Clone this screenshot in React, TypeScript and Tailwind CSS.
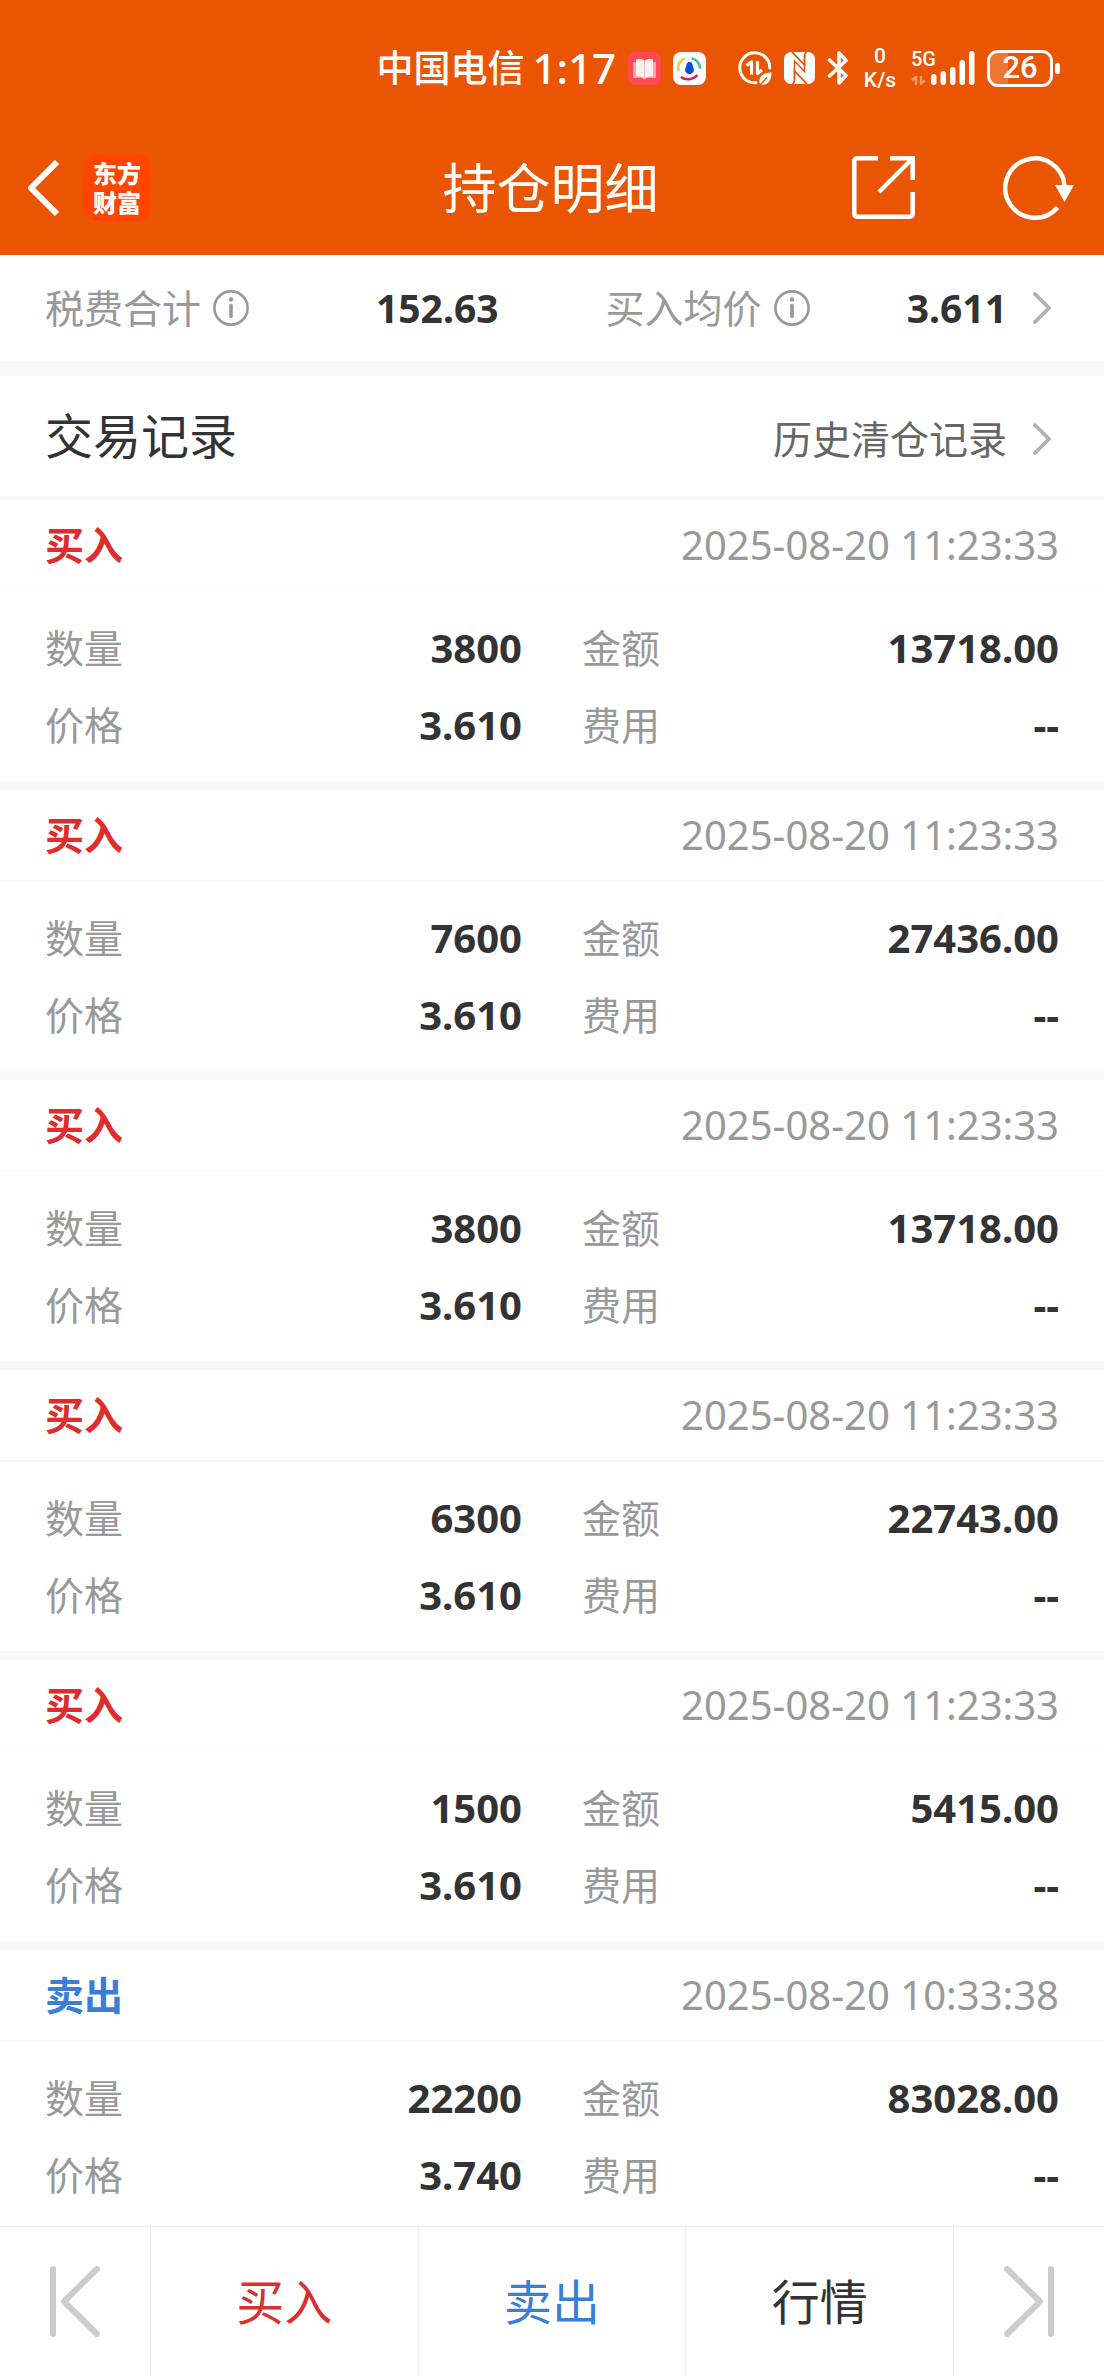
import React from "react";

type TradeRecord = {
  id: number;
  side: "buy" | "sell";
  time: string;
  quantity: string;
  amount: string;
  price: string;
  fee: string;
};

const records: TradeRecord[] = [
  { id: 1, side: "buy", time: "2025-08-20 11:23:33", quantity: "3800", amount: "13718.00", price: "3.610", fee: "--" },
  { id: 2, side: "buy", time: "2025-08-20 11:23:33", quantity: "7600", amount: "27436.00", price: "3.610", fee: "--" },
  { id: 3, side: "buy", time: "2025-08-20 11:23:33", quantity: "3800", amount: "13718.00", price: "3.610", fee: "--" },
  { id: 4, side: "buy", time: "2025-08-20 11:23:33", quantity: "6300", amount: "22743.00", price: "3.610", fee: "--" },
  { id: 5, side: "buy", time: "2025-08-20 11:23:33", quantity: "1500", amount: "5415.00", price: "3.610", fee: "--" },
  { id: 6, side: "sell", time: "2025-08-20 10:33:38", quantity: "22200", amount: "83028.00", price: "3.740", fee: "--" },
];

function BookAppIcon() {
  return (
    <svg className="size-[33px]" viewBox="0 0 33 33" aria-hidden="true">
      <rect width="33" height="33" rx="8" fill="#ff4a55" />
      <path d="M5 10h23v16h-9l-2.500 1.500L14 26H5z" fill="#ffa5aa" />
      <path d="M8 7.500c3.500-1 6.500-.5 8.500 1.500 2-2 5-2.500 8.500-1.500v17c-3.500-.7-6.500 0-8.500 2-2-2-5-2.700-8.500-2z" fill="#fff0f0" />
      <path d="M16.500 9v17" stroke="#ffc4c6" strokeWidth="1" />
    </svg>
  );
}

function FortuneAppIcon() {
  return (
    <svg className="size-[33px]" viewBox="0 0 33 33" aria-hidden="true">
      <rect width="33" height="33" rx="8" fill="#fff" />
      <g fill="none" strokeWidth="2.600">
        <path d="M5.500 19.500C4 13 8 7.500 11.500 6.500" stroke="#ecd23f" />
        <path d="M18.500 6.500c5 .5 8.500 5 8.800 10" stroke="#3cc0a0" />
        <path d="M8 25c4.500 3.500 12 3 16.500-2" stroke="#d81e5b" />
      </g>
      <path d="M16.500 10c2.300 0 3.300 2 3.300 4.500 1 1.500 1.300 3 .8 5.500-1 0-1.300 2-4.100 2s-3.100-2-4.100-2c-.5-2.500-.2-4 .8-5.500 0-2.500 1-4.500 3.300-4.500z" fill="#0b50d0" />
    </svg>
  );
}

function DataSaverIcon() {
  return (
    <svg className="size-[34px]" viewBox="0 0 34 34" fill="none" aria-hidden="true">
      <path d="M31.800 17A15 15 0 1 0 18 31.700" stroke="#fff" strokeWidth="3" strokeLinecap="round" />
      <path d="M8.500 14.500l5-3.500v12.500M19.500 10v12.500l4.500-3.500" stroke="#fff" strokeWidth="3.200" strokeLinejoin="round" />
      <path d="M21.500 32c-1-6 3-10.500 12-10.500C33.800 30 29 34.500 23.500 33.500z" fill="#fff" />
      <path d="M22 34l7-7.500" stroke="#ea5503" strokeWidth="1.400" />
    </svg>
  );
}

function NfcIcon() {
  return (
    <svg className="h-[32px] w-[31px]" viewBox="0 0 31 32" fill="none" aria-hidden="true">
      <rect width="31" height="32" rx="7" fill="#fff" />
      <g stroke="#ea5503" strokeWidth="1.800">
        <path d="M8 0l12.500 13V5c0-2.500.5-4 2-5" />
        <path d="M23 32L10.500 19v8c0 2.500-.5 4-2 5" />
        <path d="M10.500 20V9l10 10.500V12" strokeWidth="1.400" />
      </g>
    </svg>
  );
}

function BluetoothIcon() {
  return (
    <svg className="h-[34px] w-[22px]" viewBox="0 0 22 34" fill="none" stroke="#fff" strokeWidth="3.600" strokeLinejoin="round" strokeLinecap="round" aria-hidden="true">
      <path d="M2.500 25L19 9.500 12 2v30l7-7.500L2.500 9" />
    </svg>
  );
}

function SignalIcon() {
  return (
    <svg className="h-[34px] w-[44px]" viewBox="0 0 44 34" fill="#fff" aria-hidden="true">
      <rect x="0" y="23" width="5.500" height="11" rx="2.700" />
      <rect x="9.500" y="20" width="5.500" height="14" rx="2.700" />
      <rect x="19" y="16" width="5.500" height="18" rx="2.700" />
      <rect x="28.500" y="9" width="5.500" height="25" rx="2.700" />
      <rect x="38" y="0" width="5.500" height="34" rx="2.700" />
    </svg>
  );
}

function StatusBar() {
  return (
    <div className="flex h-[120px] items-center gap-3 pt-4 pr-11 text-white">
      <div className="ml-auto flex items-center gap-2 leading-10 font-medium">
        <span className="text-[37px]">中国电信</span>
        <span className="text-[42px]">1:17</span>
      </div>
      <BookAppIcon />
      <FortuneAppIcon />
      <div className="ml-5">
        <DataSaverIcon />
      </div>
      <NfcIcon />
      <BluetoothIcon />
      <div className="flex w-[38px] flex-col items-center font-[Roboto] text-[21px] leading-6 font-medium">
        <span>0</span>
        <span>K/s</span>
      </div>
      <div className="relative flex w-[64px] justify-end">
        <span className="absolute -top-1 left-0 font-[Roboto] text-[20px] leading-6 font-medium">5G</span>
        <svg className="absolute bottom-0 left-0 h-[9px] w-[16px]" viewBox="0 0 16 9" fill="none" stroke="#f59a68" strokeWidth="2.400" aria-hidden="true">
          <path d="M1 4l4-3v8M10 0v7.500l4-3" />
        </svg>
        <SignalIcon />
      </div>
      <div className="flex items-center gap-[2px]">
        <div className="relative flex h-[37px] w-[66px] items-center justify-center rounded-[11px] border-3 border-white">
          <span className="absolute inset-y-0 left-0 w-[18px] rounded-l-lg bg-white/20" />
          <span className="relative font-[Roboto] text-[31px] leading-8 font-medium">26</span>
        </div>
        <span className="h-[11px] w-[5px] rounded-[2px] bg-white" />
      </div>
    </div>
  );
}

function TitleBar() {
  return (
    <div className="grid h-[135px] grid-cols-[1fr_auto_1fr] items-center pr-[30px] pl-[27px] text-white">
      <div className="flex items-center gap-6">
        <button type="button" aria-label="返回">
          <svg className="h-[56px] w-[32px]" viewBox="0 0 32 56" fill="none" stroke="#fff" strokeWidth="6" strokeLinejoin="round" aria-hidden="true">
            <path d="M30 2L4 28l26 26" />
          </svg>
        </button>
        <div className="flex size-[68px] flex-col items-center justify-center rounded-[15px] bg-[#ff4500] text-[24px] leading-[29px] font-black">
          <span>东方</span>
          <span>财富</span>
        </div>
      </div>
      <h1 className="text-[54px] leading-[64px]">持仓明细</h1>
      <div className="flex items-center justify-end gap-[88px]">
        <button type="button" aria-label="分享">
          <svg className="size-[63px]" viewBox="0 0 63 63" fill="none" stroke="#fff" strokeWidth="4.500" aria-hidden="true">
            <path d="M26 2.300H5a2.700 2.700 0 0 0-2.700 2.700v53a2.700 2.700 0 0 0 2.700 2.700h53a2.700 2.700 0 0 0 2.700-2.700V36" />
            <path d="M38 2.300h22.700V24M59.500 3.500L27 36" />
          </svg>
        </button>
        <button type="button" aria-label="刷新">
          <svg className="h-[64px] w-[71px]" viewBox="0 0 71 64" fill="none" aria-hidden="true">
            <path d="M61.600 30A29.700 29.700 0 1 0 54.500 51.500" stroke="#fff" strokeWidth="4.500" />
            <path d="M52 29h19l-9.500 17z" fill="#fff" />
          </svg>
        </button>
      </div>
    </div>
  );
}

function InfoIcon() {
  return (
    <svg className="size-9" viewBox="0 0 36 36" fill="none" stroke="#999" strokeWidth="2.600" aria-hidden="true">
      <circle cx="18" cy="18" r="16.600" />
      <circle cx="18" cy="9.500" r="2.200" fill="#999" stroke="none" />
      <path d="M18 15.500v11" strokeWidth="3.600" strokeLinecap="round" />
    </svg>
  );
}

function ChevronRight() {
  return (
    <svg className="mr-2 h-8 w-[18px]" viewBox="0 0 18 32" fill="none" stroke="#b2b2b2" strokeWidth="3.800" strokeLinecap="round" strokeLinejoin="round" aria-hidden="true">
      <path d="M2 2l14 14L2 30" />
    </svg>
  );
}

function SummaryItem({ label, value, more }: { label: string; value: string; more?: boolean }) {
  return (
    <div className="flex flex-1 items-center justify-between">
      <button type="button" className="flex items-center gap-3 text-[#999]">
        {label}
        <InfoIcon />
      </button>
      <div className="flex items-center gap-[26px] font-bold">
        {value}
        {more && <ChevronRight />}
      </div>
    </div>
  );
}

function Field({ label, value }: { label: string; value: string }) {
  return (
    <div className="flex h-[77px] items-center justify-between">
      <dt className="text-[#999]">{label}</dt>
      <dd className="text-[40px] font-bold">{value}</dd>
    </div>
  );
}

function RecordCard({ record }: { record: TradeRecord }) {
  const buy = record.side === "buy";
  return (
    <article className="border-b-9 border-[#f7f8fa] pb-[18px] last:border-b-0 last:pb-0">
      <header className="flex h-[91px] items-center justify-between border-b border-[#f5f5f7] px-[45px]">
        <h3 className={buy ? "font-bold text-[#e02c2c]" : "font-bold text-[#3a7fd5]"}>{buy ? "买入" : "卖出"}</h3>
        <time className="text-[40px] text-[#999]">{record.time}</time>
      </header>
      <dl className="grid grid-cols-2 gap-x-[60px] px-[45px] pt-[18px]">
        <Field label="数量" value={record.quantity} />
        <Field label="金额" value={record.amount} />
        <Field label="价格" value={record.price} />
        <Field label="费用" value={record.fee} />
      </dl>
    </article>
  );
}

function EdgeIcon({ flip }: { flip?: boolean }) {
  return (
    <svg className="h-[71px] w-[50px]" viewBox="0 0 50 71" fill="none" stroke="#ccc" strokeWidth="6" strokeLinecap="round" strokeLinejoin="round" aria-hidden="true">
      <path d={flip ? "M47 3v65M3 3l33 32.500L3 68" : "M3 3v65M47 3L14 35.500 47 68"} />
    </svg>
  );
}

function BottomBar() {
  return (
    <nav className="sticky bottom-0 flex h-[150px] divide-x divide-[#ebebeb] border-t border-[#ebebeb] bg-white text-[48px]">
      <button type="button" aria-label="上一个" className="flex w-[151px] items-center justify-center">
        <EdgeIcon />
      </button>
      <button type="button" className="flex-1 text-[#d9302e]">买入</button>
      <button type="button" className="flex-1 text-[#3a7fd5]">卖出</button>
      <button type="button" className="flex-1">行情</button>
      <button type="button" aria-label="下一个" className="flex w-[150px] items-center justify-center">
        <EdgeIcon flip />
      </button>
    </nav>
  );
}

export default function App() {
  return (
    <div className="flex min-h-screen flex-col bg-white font-['Noto_Sans','Noto_Sans_CJK_SC',sans-serif] text-[39px] leading-[56px] text-[#333]">
      <header className="bg-[#ea5503]">
        <StatusBar />
        <TitleBar />
      </header>
      <section className="flex h-[121px] gap-[107px] border-b-15 border-[#f7f8fa] px-[45px]">
        <SummaryItem label="税费合计" value="152.63" />
        <SummaryItem label="买入均价" value="3.611" more />
      </section>
      <main className="grow">
        <div className="flex h-[124px] items-baseline justify-between border-b-4 border-[#f8f8fa] px-[45px] pt-8">
          <h2 className="text-[48px]">交易记录</h2>
          <a href="#history" className="flex items-center gap-[26px] text-[#666]">
            历史清仓记录
            <ChevronRight />
          </a>
        </div>
        {records.map((record) => (
          <RecordCard key={record.id} record={record} />
        ))}
      </main>
      <BottomBar />
    </div>
  );
}
